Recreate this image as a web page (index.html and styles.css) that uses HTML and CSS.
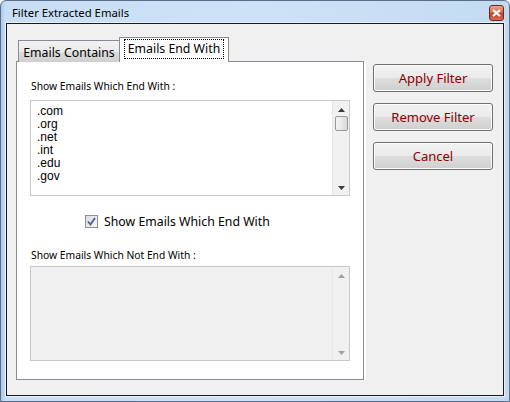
FILE: index.html
```html
<!DOCTYPE html>
<html>
<head>
<meta charset="utf-8">
<link rel="stylesheet" href="styles.css">
</head>
<body>
<div class="window">
  <div class="titlebar">
    <span class="title">Filter Extracted Emails</span>
    <span class="close"><svg width="9" height="8" viewBox="0 0 9 8"><path d="M1 1 L8 7 M8 1 L1 7" stroke="#fff" stroke-width="2.2" fill="none"/></svg></span>
  </div>
  <div class="client">
    <div class="leftcol">
      <div class="tabs">
        <div class="tab">Emails Contains</div>
        <div class="tab active"><span class="focus">Emails End With</span></div>
      </div>
      <div class="panel">
        <div class="label">Show Emails Which End With :</div>
        <div class="listbox">
          <div class="items">
            <div>.com</div>
            <div>.org</div>
            <div>.net</div>
            <div>.int</div>
            <div>.edu</div>
            <div>.gov</div>
          </div>
          <div class="scroll">
            <svg class="arrow" width="7" height="4" viewBox="0 0 7 4"><path d="M3.5 0 L7 4 L0 4 Z" fill="#3a3a3a"/></svg>
            <div class="thumb"></div>
            <div class="spacer"></div>
            <svg class="arrow" width="7" height="4" viewBox="0 0 7 4"><path d="M0 0 L7 0 L3.5 4 Z" fill="#3a3a3a"/></svg>
          </div>
        </div>
        <div class="checkrow">
          <span class="checkbox"><svg width="9" height="9" viewBox="0 0 9 9"><path d="M1 4.5 L3.5 7.5 L8 1" stroke="#4a5f97" stroke-width="1.8" fill="none"/></svg></span>
          <span class="checklabel">Show Emails Which End With</span>
        </div>
        <div class="label label2">Show Emails Which Not End With :</div>
        <div class="listbox disabled">
          <div class="items"></div>
          <div class="scroll">
            <svg class="arrow" width="7" height="4" viewBox="0 0 7 4"><path d="M3.5 0 L7 4 L0 4 Z" fill="#a0a0a0"/></svg>
            <div class="spacer"></div>
            <svg class="arrow" width="7" height="4" viewBox="0 0 7 4"><path d="M0 0 L7 0 L3.5 4 Z" fill="#a0a0a0"/></svg>
          </div>
        </div>
      </div>
    </div>
    <div class="rightcol">
      <div class="btn">Apply Filter</div>
      <div class="btn">Remove Filter</div>
      <div class="btn">Cancel</div>
    </div>
  </div>
</div>
</body>
</html>
```
FILE: styles.css
```css
html, body {
  margin: 0;
  padding: 0;
}
body {
  width: 510px;
  height: 402px;
  overflow: hidden;
  font-family: "Noto Sans", "Open Sans", sans-serif;
}
.window {
  width: 510px;
  height: 402px;
  box-sizing: border-box;
  background: linear-gradient(90deg, #a9c9ea 0px, #c7def4 4px, #cde2f6 50%, #c3dbf2 100%);
  border: 1px solid #5a6e8a;
  border-radius: 6px 6px 0 0;
  display: flex;
  flex-direction: column;
  padding: 0 5px 5px 5px;
}
.titlebar {
  height: 22px;
  flex: none;
  display: flex;
  align-items: center;
  justify-content: space-between;
  padding-left: 6px;
}
.title {
  font-size: 11.3px;
  color: #000;
  white-space: nowrap;
}
.close {
  width: 13px;
  height: 14px;
  border: 1px solid #6b2a20;
  border-radius: 3px;
  background: linear-gradient(#eaa48e, #d5634a 50%, #c2402a 51%, #d86a4c);
  display: flex;
  align-items: center;
  justify-content: center;
  margin-top: 2px;
}
.client {
  flex: 1;
  background: #f0f0f0;
  border: 1px solid #1a1a1a;
  box-shadow: 0 0 0 1px #e8f0f8;
  display: flex;
  padding: 14px 0 0 9px;
}
.leftcol {
  width: 348px;
  display: flex;
  flex-direction: column;
}
.tabs {
  height: 24px;
  display: flex;
  align-items: flex-end;
  padding-left: 2px;
  position: relative;
  z-index: 2;
  margin-bottom: -1px;
}
.tab {
  height: 22px;
  box-sizing: border-box;
  border: 1px solid #898c95;
  border-bottom: none;
  background: linear-gradient(#f2f2f2, #ebebeb 50%, #dcdcdc 51%, #cfcfcf);
  font-size: 12.3px;
  white-space: nowrap;
  color: #000;
  display: flex;
  align-items: center;
  width: 102px;
  justify-content: center;
  padding-top: 1px;
}
.tab.active {
  height: 25px;
  width: 110px;
  margin-left: -1px;
  background: #fff;
  padding-top: 0;
  padding-bottom: 2px;
}
.focus {
  border: 1px dotted #000;
  padding: 0 3px;
  height: 18px;
  line-height: 18px;
  display: block;
}
.panel {
  height: 319px;
  box-sizing: border-box;
  background: #fff;
  border: 1px solid #898c95;
  padding: 17px 0 0 13px;
  box-shadow: 2px 0 0 #fff;
}
.label {
  font-size: 10.3px;
  line-height: 14px;
  color: #000;
  padding-left: 1px;
  white-space: nowrap;
}
.listbox {
  margin-top: 7px;
  width: 320px;
  height: 96px;
  box-sizing: border-box;
  border: 1px solid #c8c8c8;
  background: #fff;
  display: flex;
}
.items {
  flex: 1;
  padding: 4px 0 0 6px;
  font-family: "Liberation Sans", Arial, sans-serif;
  font-size: 12px;
  line-height: 13px;
  color: #000;
}
.scroll {
  width: 17px;
  background: #f1f1f1;
  border-left: 1px solid #e6e6e6;
  display: flex;
  flex-direction: column;
  align-items: center;
  padding: 7px 0 5px;
  box-sizing: border-box;
}
.arrow {
  flex: none;
}
.thumb {
  width: 13px;
  height: 15px;
  margin-top: 4px;
  border: 1px solid #979797;
  border-radius: 2px;
  background: linear-gradient(90deg, #f4f4f4, #e9e9e9 50%, #d8d8d8);
  box-sizing: border-box;
}
.spacer {
  flex: 1;
}
.checkrow {
  display: flex;
  align-items: center;
  margin-top: 18px;
  padding-left: 55px;
  height: 15px;
}
.checkbox {
  width: 13px;
  height: 13px;
  box-sizing: border-box;
  border: 1px solid #8e8f8f;
  background: linear-gradient(135deg, #dcdcdc, #f6f6f6);
  display: flex;
  align-items: center;
  justify-content: center;
}
.checklabel {
  font-size: 12.3px;
  color: #000;
  margin-left: 6px;
  white-space: nowrap;
}
.label2 {
  margin-top: 19px;
}
.listbox.disabled {
  margin-top: 4px;
  height: 95px;
  background: #f0f0f0;
}
.listbox.disabled .scroll {
  background: #f0f0f0;
  border-left: 1px solid #e8e8e8;
}
.rightcol {
  margin-left: 9px;
  padding-top: 26px;
  display: flex;
  flex-direction: column;
  gap: 11px;
}
.btn {
  width: 120px;
  height: 28px;
  box-sizing: border-box;
  border: 1px solid #707070;
  border-radius: 3px;
  background: linear-gradient(#f2f2f2, #ebebeb 48%, #dddddd 52%, #cfcfcf);
  box-shadow: inset 0 0 0 1px #fbfbfb;
  color: #8b0000;
  font-size: 13px;
  display: flex;
  align-items: center;
  justify-content: center;
}
```
